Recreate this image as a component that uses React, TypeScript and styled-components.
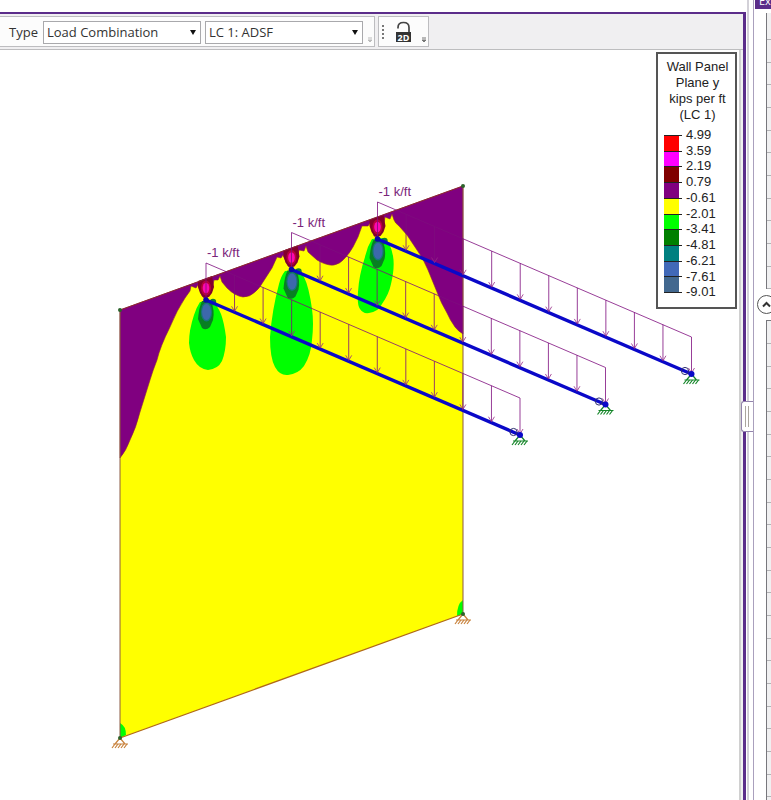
import React from "react";
import styled, { createGlobalStyle } from "styled-components";

const GlobalStyle = createGlobalStyle`
  * { box-sizing: border-box; }
  body { margin: 0; background: #fff; overflow: hidden; }
`;

const UI_FONT = `"Open Sans", "Noto Sans", sans-serif`;
const PLOT_FONT = `"Liberation Sans", Arial, sans-serif`;
const PURPLE = "#5b2d8a";

const Page = styled.div`
  display: flex;
  height: 100vh;
  overflow: hidden;
  font-family: ${UI_FONT};
  color: #333;
`;

const Workspace = styled.main`
  flex: 1;
  min-width: 0;
  display: flex;
  flex-direction: column;
  padding-top: 12px;
`;

const ModelWindow = styled.section`
  flex: 1;
  min-height: 0;
  display: flex;
  flex-direction: column;
  border-top: 2px solid ${PURPLE};
  border-right: 3px solid ${PURPLE};
  background: #f0eff1;
`;

const Toolbar = styled.div`
  display: flex;
  gap: 3px;
  padding: 2px 0;
  height: 36px;
  border-bottom: 1px solid #bdbdbf;
`;

const ToolGroup = styled.div`
  display: flex;
  align-items: center;
  gap: 4px;
  padding: 1px 0 0 9px;
  border: 1px solid #bdbdc0;
  border-left-width: 0;
  background: #fcfcfc;

  & + & {
    border-left-width: 1px;
    padding-left: 3px;
  }
`;

const TypeLabel = styled.label`
  font-size: 13px;
  line-height: 20px;
  width: 30px;
  white-space: nowrap;
`;

const SelectFrame = styled.span`
  position: relative;
  display: flex;
  width: 158px;

  svg {
    position: absolute;
    right: 5px;
    top: 9px;
    pointer-events: none;
  }
`;

const Select = styled.select`
  appearance: none;
  width: 100%;
  height: 23px;
  padding: 0 16px 0 3px;
  border: 1px solid #a9a9ac;
  border-radius: 0;
  background: #fff;
  color: #333;
  font: 13px/20px ${UI_FONT};
`;

const Overflow = styled.button`
  align-self: flex-end;
  display: flex;
  width: 7px;
  height: 9px;
  padding: 0;
  border: 0;
  background: none;
`;

const LockButton = styled.button`
  display: flex;
  width: 28px;
  height: 26px;
  padding: 0;
  justify-content: center;
  align-items: center;
  border: 0;
  background: none;
`;

const Viewport = styled.div`
  position: relative;
  flex: 1;
  min-height: 0;
  overflow: hidden;
  background: #fff;
  margin-right: 2px;
  border-right: 2px solid #d0d0d0;
`;

const Drawing = styled.svg`
  display: block;
  width: 100%;
  font: 13px ${PLOT_FONT};
`;

const Legend = styled.aside`
  position: absolute;
  top: 2px;
  right: 2px;
  width: 81px;
  height: 257px;
  padding: 5px 4px 0 6px;
  border: 2px solid #555;
  background: #fff;
  color: #222;
  font: 13px/16px ${PLOT_FONT};
`;

const LegendTitle = styled.div`
  text-align: center;
  white-space: pre-line;
`;

const Scale = styled.div`
  display: flex;
  gap: 4px;
  padding-top: 4px;
`;

const Swatches = styled.div`
  display: flex;
  flex-direction: column;
  width: 18px;
  height: 158px;
  margin-top: 8px;
  border-bottom: 1px solid #222;
`;

const Swatch = styled.div<{ $color: string }>`
  flex: 1;
  border-top: 1px solid #222;
  background: linear-gradient(to right, ${(p) => p.$color} 15px, #fff 15px);
`;

const ScaleValues = styled.div`
  display: flex;
  flex-direction: column;
  height: 173px;
`;

const ScaleValue = styled.span`
  flex: 1;
  min-height: 0;
`;

const Splitter = styled.div`
  width: 8px;
  display: flex;
  align-items: center;
  justify-content: flex-end;
  padding-top: 32px;
  background: linear-gradient(to right, #fff 1px, #d3d1d8 1px, #d3d1d8 3px, #fff 3px);
  border-right: 1px solid #aaa0bd;
`;

const Grip = styled.button`
  flex: none;
  position: relative;
  width: 12px;
  height: 31px;
  padding: 4px 3px;
  display: flex;
  gap: 2px;
  border: 1px solid #9384ac;
  border-right: 0;
  border-radius: 3px 0 0 3px;
  background: #fff;

  &::before, &::after {
    content: "";
    width: 1px;
    height: 21px;
    background: #aaa69e;
  }
`;

const SidePanel = styled.aside`
  width: 17px;
  display: flex;
  flex-direction: column;
  overflow: hidden;
`;

const PanelTitle = styled.div`
  flex: none;
  display: flex;
  align-items: flex-end;
  height: 9px;
  margin-left: 1px;
  padding-left: 4px;
  overflow: hidden;
  background: ${PURPLE};
  color: #fff;
  font-size: 11px;
  line-height: 16px;
`;

const ItemList = styled.div<{ $fill?: boolean }>`
  flex: ${(p) => (p.$fill ? "1" : "none")};
  min-height: 0;
  overflow: hidden;
  margin: ${(p) => (p.$fill ? "0 0 0 12px" : "4px 0 0 12px")};
  padding-top: ${(p) => (p.$fill ? "0" : "4px")};
  border-left: 1px solid #77777c;
  border-top: ${(p) => (p.$fill ? "1px solid #77777c" : "0")};
  background: #f0f0f1;
`;

const Item = styled.div`
  height: 23px;
  border-bottom: 1px solid #b2b2b5;

  &:nth-child(3n) { height: 22px; }
`;

const CollapseBar = styled.div`
  flex: none;
  display: flex;
  align-items: center;
  height: 31px;
  padding-left: 3px;
`;

const CollapseButton = styled.button`
  flex: none;
  display: flex;
  align-items: center;
  justify-content: center;
  width: 19px;
  height: 19px;
  padding: 0;
  border: 1px solid #555;
  border-radius: 50%;
  background: #fff;
`;

const bands = [
  "#ff0000", "#ff00ff", "#800000", "#800080", "#ffff00",
  "#00ff00", "#008000", "#008080", "#4169b8", "#42688f",
];
const values = ["4.99", "3.59", "2.19", "0.79", "-0.61", "-2.01", "-3.41", "-4.81", "-6.21", "-7.61", "-9.01"];

const LOAD = "#7d0c7d";
const BEAM_DX = 314;
const BEAM_DY = 135;
const LOAD_HEIGHT = 37;
const SEGMENTS = 11;

const beams = [
  { x: 206, y: 300 },
  { x: 291.5, y: 269.5 },
  { x: 377.5, y: 239 },
];

const Support = ({ x, y, color }: { x: number; y: number; color: string }) => (
  <g stroke={color} fill="none" strokeWidth="1.2">
    <path d={`M${x} ${y} l-5 6 M${x} ${y} l5 6 M${x - 7} ${y + 6} h15`} />
    <path
      d={[-5, -2, 1, 4, 7].map((d) => `M${x + d} ${y + 6} l-3 4`).join(" ")}
    />
  </g>
);

const Beam = ({ x, y }: { x: number; y: number }) => {
  const stations = Array.from({ length: SEGMENTS + 1 }, (_, i) => ({
    sx: x + (BEAM_DX * i) / SEGMENTS,
    sy: y + (BEAM_DY * i) / SEGMENTS,
  }));
  const ex = x + BEAM_DX;
  const ey = y + BEAM_DY;
  return (
    <g>
      <Support x={ex} y={ey} color="#16862a" />
      <path d={`M${x} ${y} L${ex} ${ey}`} stroke="#0a08c8" strokeWidth="3.4" />
      <g stroke={LOAD} fill="none" strokeWidth="0.8">
        <path d={`M${x} ${y - LOAD_HEIGHT} L${ex} ${ey - LOAD_HEIGHT}`} />
        {stations.map(({ sx, sy }) => (
          <path key={sx} d={`M${sx} ${sy - LOAD_HEIGHT} V${sy - 1}`} />
        ))}
        {stations.slice(1).map(({ sx, sy }) => (
          <path key={sx} stroke="#962a86" d={`M${sx - 3} ${sy - 6} L${sx} ${sy - 1} L${sx + 3} ${sy - 6}`} />
        ))}
      </g>
      <circle cx={ex - 6.5} cy={ey - 3} r="3.6" fill="none" stroke="#303070" />
      <circle cx={x} cy={y} r="2.8" fill="#0a08a8" />
      <circle cx={ex} cy={ey} r="3" fill="#0a08c8" />
      <text x={x + 1} y={y - 43} fill="#7a247a">-1 k/ft</text>
    </g>
  );
};

const Hotspot = ({ x, y }: { x: number; y: number }) => (
  <g>
    <path
      d={`M${x - 8} ${y - 19} L${x + 6} ${y - 24} L${x + 8} ${y - 13} L${x + 6} ${y - 7} L${x + 3} ${y - 3} L${x - 3} ${y - 3} L${x - 6} ${y - 7} L${x - 8} ${y - 13} Z`}
      fill="#82002c"
    />
    <ellipse cx={x} cy={y - 12} rx="5" ry="7.5" fill="#b8003c" />
    <ellipse cx={x} cy={y - 12} rx="3.3" ry="5.3" fill="#fb08b0" />
    <circle cx={x + 7} cy={y + 2} r="3.2" fill="#0c8030" />
    <path
      d={`M${x - 4} ${y + 1} L${x + 5} ${y + 1} Q${x + 9} ${y + 11} ${x + 7} ${y + 20} L${x + 4} ${y + 27} Q${x} ${y + 31} ${x - 4} ${y + 28} L${x - 8} ${y + 19} Q${x - 7} ${y + 7} ${x - 4} ${y + 1} Z`}
      fill="#087f22"
    />
    <ellipse cx={x + 0.5} cy={y + 12} rx="5.6" ry="9.6" fill="#16767a" />
    <ellipse cx={x + 0.5} cy={y + 12} rx="4.4" ry="8" fill="#3d68ac" />
  </g>
);

const Model = () => (
  <Drawing viewBox="0 50 739 750" role="img" aria-label="Wall panel force contours">
    <path d="M120 310 L463 186 V614 L120 738 Z" fill="#ffff00" />
    <path
      d="M120 310 L463 186 V334 Q458 331 455 327 Q450 320 447 313 Q441 303 437 292 L428 270 Q423 258 417 250 L407 235 L399 226 Q395 223 394 220 L392 214 L390 219 L385 217 L383 229 L378 238 L374 236 L370 223 L368 226 L362 226 L358 237 L353 247 Q349 254 345 258 Q340 264 334 265 Q327 266 317 260 L308 252 L306 246 L304 251 L299 250 L297 260 L292 269 L288 266 L283 255 L281 258 L277 257 L272 268 L263 282 Q259 289 255 292 Q250 297 243 297 Q235 296 227 288 L222 282 L220 276 L218 280 L214 280 L212 290 L206 300 L202 296 L198 285 L196 288 L191 286 L190 291 L185 298 Q177 310 170 327 Q160 347 157 360 Q153 370 150 380 L140 412 Q136 428 130 440 Q126 451 120 458 Z"
      fill="#800080"
      stroke="#8b2438"
      strokeWidth="0.6"
    />
    <g fill="#00ff00">
      <path d="M200 302 Q196 308 194 315 Q189 330 189 343 Q190 353 194 360 Q199 369 208 370 Q218 369 222 361 Q226 351 226 337 Q224 322 221 314 Q217 305 213 301 Z" />
      <path d="M285 271 Q281 276 279 284 Q272 310 270 337 Q270 358 275 367 Q280 376 288 375 Q298 374 304 366 Q311 355 312 340 Q314 323 312 309 Q309 287 304 277 L298 270 Z" />
      <path d="M372 239 Q367 247 365 257 Q359 275 358 292 Q357 305 360 309 Q363 314 369 313 Q378 312 382 304 Q389 294 391 284 Q395 267 393 256 Q391 244 384 238 Z" />
      <path d="M120 723 Q126 726 126 735 L120 738 Z" />
      <path d="M463 600 Q457 604 457 616 L463 614 Z" />
    </g>
    {beams.map((b) => <Hotspot key={b.x} {...b} />)}
    <path d="M120 310 V738 M463 186 V614" stroke="#8b5a44" fill="none" />
    <path d="M120 310 L463 186" stroke="#8b2438" fill="none" />
    <path d="M120 738 L463 614" stroke="#b06818" strokeWidth="1.3" fill="none" />
    {beams.map((b) => <Beam key={b.x} {...b} />)}
    <Support x={120} y={738} color="#c8823c" />
    <Support x={463} y={614} color="#c8823c" />
    <g fill="#2c632c">
      <circle cx="120" cy="310" r="2" />
      <circle cx="463" cy="186" r="2" />
      <circle cx="120" cy="738" r="2" />
      <circle cx="463" cy="614" r="2" />
    </g>
  </Drawing>
);

const Picker = ({ id, label, options }: { id: string; label?: string; options: string[] }) => (
  <SelectFrame>
    <Select id={id} aria-label={label}>
      {options.map((o) => <option key={o}>{o}</option>)}
    </Select>
    <svg width="6" height="5" aria-hidden="true"><path d="M0 0 H6 L3 5 Z" fill="#111" /></svg>
  </SelectFrame>
);

const More = ({ color }: { color: string }) => (
  <Overflow aria-label="Toolbar options">
    <svg width="6" height="6"><path d="M1 1 H5 M1 3 H5 L3 5 Z" stroke={color} fill={color} /></svg>
  </Overflow>
);

export default function App() {
  return (
    <Page>
      <GlobalStyle />
      <Workspace>
        <ModelWindow>
          <Toolbar>
            <ToolGroup>
              <TypeLabel htmlFor="result-type">Type</TypeLabel>
              <Picker id="result-type" options={["Load Combination"]} />
              <Picker id="load-case" label="Load combination" options={["LC 1: ADSF"]} />
              <More color="#bbb" />
            </ToolGroup>
            <ToolGroup>
              <svg width="3" height="16" aria-hidden="true">
                <path d="M1 1 v2 M1 5 v2 M1 9 v2 M1 13 v2" stroke="#777" strokeWidth="2" />
              </svg>
              <LockButton aria-label="Unlock 2D view">
                <svg width="18" height="22" viewBox="0 0 18 22">
                  <path d="M4 7.5 V6.5 Q4 1.5 9.5 1.5 Q15 1.5 15 6.5 V12" fill="none" stroke="#444" strokeWidth="1.7" />
                  <rect x="2" y="11" width="15" height="10" fill="#333" />
                  <text x="9.5" y="19.5" textAnchor="middle" fontSize="9" fontWeight="700" fontFamily="Open Sans, sans-serif" fill="#fff">2D</text>
                </svg>
              </LockButton>
              <More color="#777" />
            </ToolGroup>
          </Toolbar>
          <Viewport>
            <Model />
            <Legend>
              <LegendTitle>{"Wall Panel\nPlane y\nkips per ft\n(LC 1)"}</LegendTitle>
              <Scale>
                <Swatches>{bands.map((c) => <Swatch key={c} $color={c} />)}</Swatches>
                <ScaleValues>{values.map((v) => <ScaleValue key={v}>{v}</ScaleValue>)}</ScaleValues>
              </Scale>
            </Legend>
          </Viewport>
        </ModelWindow>
      </Workspace>
      <Splitter><Grip aria-label="Resize panel" /></Splitter>
      <SidePanel>
        <PanelTitle>Ex</PanelTitle>
        <ItemList>{Array.from({ length: 12 }, (_, i) => <Item key={i} />)}</ItemList>
        <CollapseBar>
          <CollapseButton aria-label="Collapse">
            <svg width="9" height="7"><path d="M1 5.5 L4.5 2 L8 5.5" fill="none" stroke="#333" strokeWidth="2" /></svg>
          </CollapseButton>
        </CollapseBar>
        <ItemList $fill>{Array.from({ length: 40 }, (_, i) => <Item key={i} />)}</ItemList>
      </SidePanel>
    </Page>
  );
}
